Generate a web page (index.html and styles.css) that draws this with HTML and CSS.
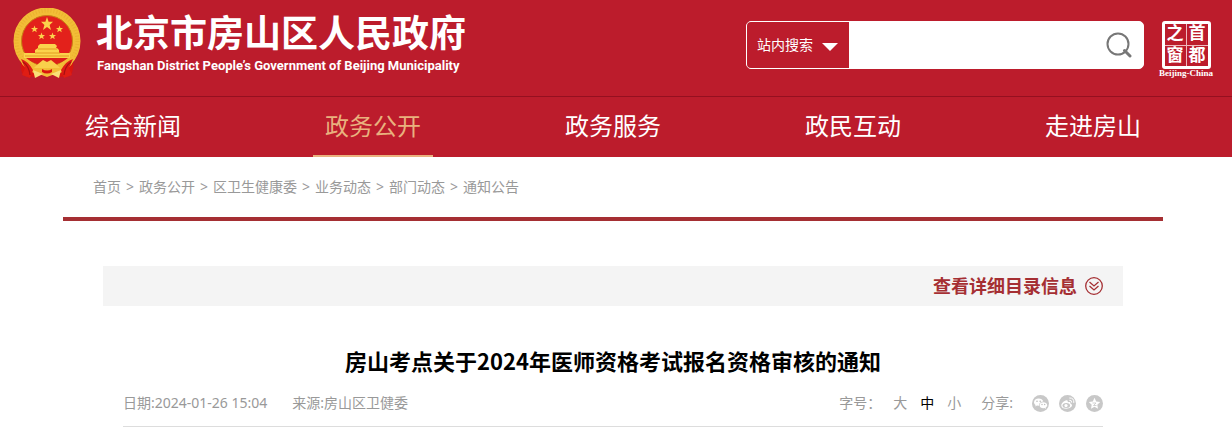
FILE: index.html
```html
<!DOCTYPE html>
<html lang="zh-CN">
<head>
<meta charset="utf-8">
<title>房山考点关于2024年医师资格考试报名资格审核的通知</title>
<link rel="stylesheet" href="styles.css">
</head>
<body>
<header class="site-header">
  <div class="wide masthead">
    <a class="brand" href="#">
      <svg class="emblem" viewBox="0 0 68 72" aria-hidden="true">
        <path d="M10 46 Q5 60 11 68 L24 69 L34 64 L44 69 L57 68 Q63 60 58 46Z" fill="#d9150f"/>
        <circle cx="34" cy="33" r="29.500" fill="#e3211b" stroke="#f2bd37" stroke-width="8"/>
        <circle cx="34" cy="33" r="30.500" fill="none" stroke="#d99418" stroke-width="4" stroke-dasharray="1 2" opacity=".25"/>
        <circle cx="34" cy="33" r="25.500" fill="#e3211b" stroke="#c98716" stroke-width="1"/>
        <g fill="#fbd34c">
          <path d="M34 9 L35.600 13.800 L40 13.800 L36.600 17 L38 22 L34 19 L30 22 L31.400 17 L28 13.800 L32.400 13.800Z"/>
          <path id="star" d="M21.500 17.500 L22.400 20 L25 20 L23 21.700 L23.800 24.300 L21.500 22.800 L19.200 24.300 L20 21.700 L18 20 L20.600 20Z"/>
          <use href="#star" x="25"/>
          <use href="#star" x="7" y="7"/>
          <use href="#star" x="18" y="7"/>
          <path d="M25 38 L27 36 H42 L44 38 L43 40 H44 L46 42 V45 H57 V50 H11 V45 H22 V42 L25 40Z"/>
        </g>
        <path d="M25 41 H44 M22 45 H47 M12 48 H56" stroke="#e39b20" stroke-width="1" fill="none"/>
        <path d="M13 50 H55 Q47 57 34 57 Q21 57 13 50Z" fill="#dc2018"/>
        <path d="M6 44 Q12 57 27 61 L25 66 Q15 64 9 56Z M62 44 Q56 57 41 61 L43 66 Q53 64 59 56Z" fill="#f2bd37"/>
        <path d="M8 51 Q15 53 20 62 L17 70 L9 67 L12 60Z M60 51 Q53 53 48 62 L51 70 L59 67 L56 60Z" fill="#df1d14"/>
        <path d="M10 54 Q16 58 17 67 M58 54 Q52 58 51 67" fill="none" stroke="#a80f12" stroke-width="1.200"/>
        <path d="M25 56 L30 52 L34 54 L38 52 L43 56 L47 60 L34 60 L21 60Z" fill="#f9cf4b"/>
        <path d="M25 60 L34 63 L43 60 L42 66 L34 69 L26 66Z" fill="#f2bd37"/>
        <path d="M29 61 Q34 64 39 61 L39 64 Q34 67 29 64Z" fill="#d9150f"/>
        <path d="M20 62 L30 66 L22 70Z M48 62 L38 66 L46 70Z" fill="#f9df78"/>
      </svg>
      <span class="brand-text">
        <span class="brand-cn">北京市房山区人民政府</span>
        <span class="brand-en">Fangshan District People’s Government of Beijing Municipality</span>
      </span>
    </a>
    <div class="tools">
      <form class="search">
        <div class="scope">
          <select aria-label="搜索范围"><option>站内搜索</option></select>
          <svg class="caret" viewBox="0 0 16 8" aria-hidden="true"><path d="M0 0H16L8 8Z" fill="#fff"/></svg>
        </div>
        <input type="text" aria-label="搜索关键词">
        <button type="submit" aria-label="搜索">
          <svg viewBox="0 0 26 26" fill="none" stroke="#777" stroke-width="2"><circle cx="12" cy="12" r="10.500"/><path d="M18.500 18.500L24 24" stroke-width="3" stroke-linecap="round"/></svg>
        </button>
      </form>
      <a class="capital" href="#">
        <span class="seal"><span>之</span><span>首</span><span>窗</span><span>都</span></span>
        <span class="seal-en">Beijing-China</span>
      </a>
    </div>
  </div>
  <nav class="main-nav">
    <div class="wide nav-list">
      <a href="#">综合新闻</a>
      <a href="#" class="current">政务公开</a>
      <a href="#">政务服务</a>
      <a href="#">政民互动</a>
      <a href="#">走进房山</a>
    </div>
  </nav>
</header>
<main class="page">
  <nav class="crumbs">
    <a href="#">首页</a><span>&gt;</span><a href="#">政务公开</a><span>&gt;</span><a href="#">区卫生健康委</a><span>&gt;</span><a href="#">业务动态</a><span>&gt;</span><a href="#">部门动态</a><span>&gt;</span><a href="#">通知公告</a>
  </nav>
  <article class="article">
    <div class="catalog">
      <button type="button">查看详细目录信息
        <svg viewBox="0 0 18 18" fill="none" stroke="#a52f33" aria-hidden="true"><circle cx="9" cy="9" r="8.300" stroke-width="1.300"/><path d="M4.500 5L9 9L13.500 5M4.500 9L9 13L13.500 9" stroke-width="1.300"/></svg>
      </button>
    </div>
    <h1>房山考点关于2024年医师资格考试报名资格审核的通知</h1>
    <div class="meta">
      <span>日期:2024-01-26 15:04</span>
      <span>来源:房山区卫健委</span>
      <div class="meta-tools">
        <span class="size-label">字号：</span>
        <div class="sizes">
          <button type="button">大</button>
          <button type="button" class="active">中</button>
          <button type="button">小</button>
        </div>
        <span>分享:</span>
        <div class="share">
          <a href="#" aria-label="微信"><svg viewBox="0 0 17 17"><circle cx="8.500" cy="8.500" r="8.500" fill="#c8c8c8"/><path d="M6.700 3.500C4 3.500 2 5 2 7.200C2 8.400 2.600 9.300 3.600 10L3.200 11.500L5 10.600L7 10.800C7 8 9 6.600 11.300 6.600C10.700 4.800 9 3.500 6.700 3.500Z" fill="#fff"/><path d="M11.300 7.200C9.200 7.200 7.600 8.500 7.600 10.200C7.600 12 9.200 13.200 11.300 13.200L12.500 13L14 13.800L13.700 12.500C14.600 11.900 15.200 11.200 15.200 10.200C15.200 8.500 13.400 7.200 11.300 7.200Z" fill="#fff"/><g fill="#bbb"><circle cx="5" cy="6.200" r=".8"/><circle cx="8.200" cy="6.200" r=".8"/><circle cx="10" cy="9.500" r=".7"/><circle cx="12.700" cy="9.500" r=".7"/></g></svg></a>
          <a href="#" aria-label="微博"><svg viewBox="0 0 17 17"><circle cx="8.500" cy="8.500" r="8.500" fill="#c8c8c8"/><path d="M7.500 5.200C5 5.500 2.300 8.200 2.300 10.400C2.300 12.500 4.600 13.700 7.200 13.700C10.600 13.700 13 12 13 10.300C13 9.200 12.200 8.700 11.300 8.400C11.700 7 10.800 6.500 8.800 7.200C9 6 8.600 5.100 7.500 5.200Z" fill="#fff"/><ellipse cx="7.300" cy="10.400" rx="3.800" ry="2.500" fill="#c8c8c8"/><circle cx="7" cy="10.600" r="1.600" fill="#fff"/><path d="M10.300 5.300Q12.800 5 12.700 7.600M10.300 3Q15.300 2.700 14.800 7.900" fill="none" stroke="#fff" stroke-width="1"/></svg></a>
          <a href="#" aria-label="收藏"><svg viewBox="0 0 17 17"><circle cx="8.500" cy="8.500" r="8.500" fill="#c8c8c8"/><path d="M8.500 2.800L10.200 6.500L14.200 7L11.300 9.700L12 13.700L8.500 11.700L5 13.700L5.700 9.700L2.800 7L6.800 6.500Z" fill="#fff"/><path d="M6.500 8H10L7.500 10.500H10.500" fill="none" stroke="#c8c8c8" stroke-width=".8"/></svg></a>
        </div>
      </div>
    </div>
  </article>
</main>
</body>
</html>
```
FILE: styles.css
```css
* {
  box-sizing: border-box;
}

body {
  margin: 0;
  background: #fff;
  color: #999;
  font: 14px/20px "Noto Sans", "Noto Sans CJK SC", sans-serif;
}

a {
  color: inherit;
  text-decoration: none;
}

button,
input,
select {
  margin: 0;
  padding: 0;
  border: 0;
  background: none;
  color: inherit;
  font: inherit;
}

button {
  cursor: pointer;
}

svg {
  display: block;
}

.site-header {
  background: #bc1c2c;
  color: #fff;
}

.wide {
  max-width: 1232px;
  margin: 0 auto;
  padding: 0 19px 0 13px;
}

.masthead {
  display: flex;
  justify-content: space-between;
  align-items: flex-start;
  padding-top: 8px;
  padding-bottom: 16px;
}

.brand {
  display: flex;
  gap: 15px;
}

.emblem {
  width: 68px;
  height: 72px;
}

.brand-text {
  display: flex;
  flex-direction: column;
  white-space: nowrap;
}

.brand-cn {
  font: bold 37px/46px "Noto Sans CJK SC", sans-serif;
}

.brand-en {
  padding-left: 1px;
  font: bold 13px/24px Roboto, sans-serif;
}

.tools {
  display: flex;
  gap: 15px;
  padding-top: 13px;
}

.search {
  display: flex;
  width: 398px;
  height: 48px;
  border: 1px solid #fff;
  border-radius: 5px;
  background: #fff;
  overflow: hidden;
}

.scope {
  position: relative;
  width: 102px;
  background: #bc1c2c;
}

.scope select {
  width: 100%;
  height: 100%;
  padding-left: 10px;
  appearance: none;
}

.caret {
  position: absolute;
  top: 21px;
  right: 11px;
  width: 16px;
  height: 8px;
  pointer-events: none;
}

.search input {
  flex: 1;
  min-width: 0;
  padding: 0 10px;
  color: #333;
}

.search button {
  width: 50px;
  padding-left: 13px;
}

.search button svg {
  width: 26px;
  height: 26px;
}

.capital {
  display: flex;
  flex-direction: column;
  align-items: center;
  width: 54px;
}

.seal {
  display: grid;
  grid-template-columns: 1fr 1fr;
  gap: 1px;
  width: 49px;
  height: 48px;
  border: 3px solid #fff;
  border-radius: 3px;
  background: #efb9be;
}

.seal span {
  background: #bc1c2c;
  text-align: center;
  font: bold 17px/20px "Liberation Sans", "Noto Sans CJK SC", sans-serif;
}

.seal-en {
  font: bold 9px/9px "Liberation Serif", serif;
  white-space: nowrap;
}

.main-nav {
  border-top: 1px solid #951020;
}

.nav-list {
  display: flex;
}

.nav-list a {
  display: flex;
  flex: 1;
  flex-direction: column;
  align-items: center;
  height: 60px;
  font-size: 24px;
  line-height: 58px;
}

.nav-list .current {
  color: #e9b17e;
}

.nav-list .current::after {
  width: 120px;
  height: 2px;
  background: #e9b17e;
  content: "";
}

.page {
  max-width: 1232px;
  margin: 0 auto;
  padding: 0 69px 0 63px;
}

.crumbs {
  display: flex;
  gap: 5px;
  padding: 20px 30px;
  border-bottom: 4px solid #a52f33;
}

.article {
  padding: 45px 40px 0;
}

.catalog {
  display: flex;
  justify-content: flex-end;
  height: 40px;
  padding-right: 20px;
  background: #f4f4f4;
}

.catalog button {
  display: flex;
  align-items: center;
  gap: 8px;
  color: #a52f33;
  font-size: 18px;
  font-weight: bold;
}

.catalog svg {
  width: 18px;
  height: 18px;
}

h1 {
  margin: 38px 0 0;
  color: #000;
  text-align: center;
  font: bold 22px/32px "Noto Sans CJK SC", sans-serif;
}

.meta {
  display: flex;
  gap: 25px;
  margin: 0 20px;
  padding: 17px 0 13px;
  border-bottom: 1px solid #ddd;
}

.meta-tools {
  display: flex;
  align-items: center;
  margin-left: auto;
}

.sizes {
  display: flex;
  gap: 13px;
  margin: 0 20px 0 12px;
}

.sizes .active {
  color: #000;
}

.share {
  display: flex;
  gap: 10px;
  margin-left: 19px;
}

.share svg {
  width: 17px;
  height: 17px;
}
```
